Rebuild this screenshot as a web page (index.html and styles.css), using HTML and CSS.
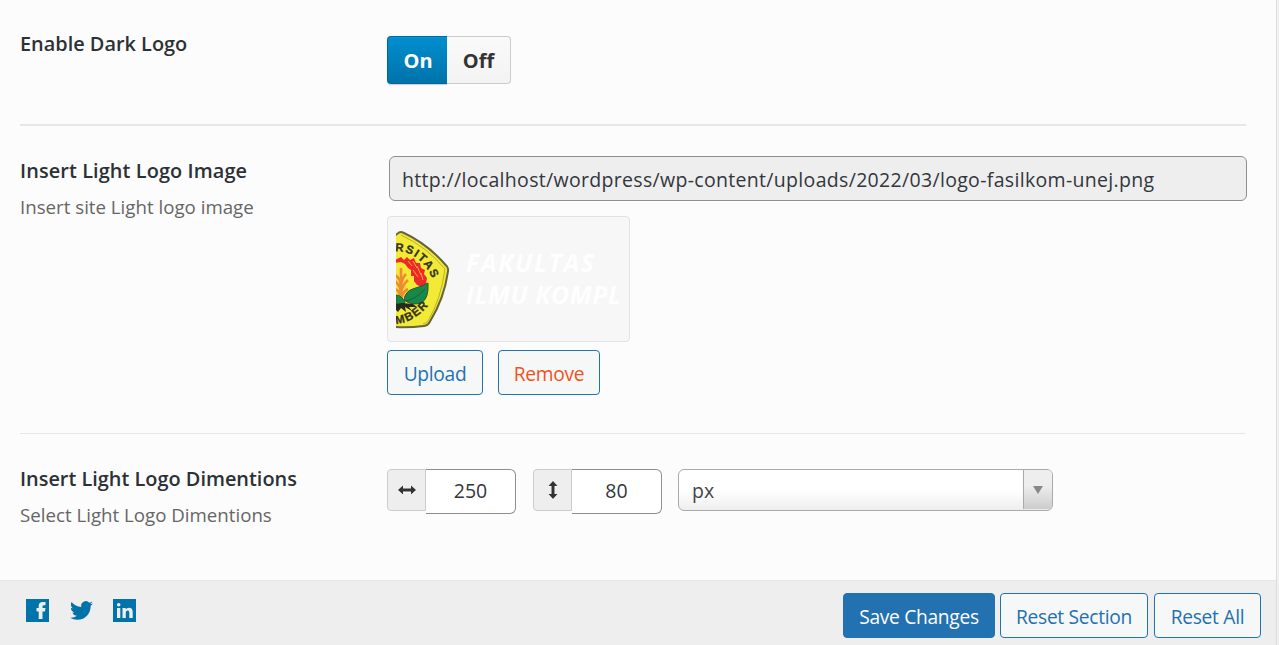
FILE: index.html
```html
<!DOCTYPE html>
<html lang="en">
<head>
<meta charset="utf-8">
<title>Logo settings</title>
<link rel="stylesheet" href="styles.css">
</head>
<body>
<div class="panel">
  <main class="fields">
    <section class="row row-switch">
      <div class="label"><h3>Enable Dark Logo</h3></div>
      <div class="control">
        <div class="switch"><span class="on">On</span><span class="off">Off</span></div>
      </div>
    </section>
    <section class="row row-image">
      <div class="label"><h3 class="wide">Insert Light Logo Image</h3><p>Insert site Light logo image</p></div>
      <div class="control">
        <div class="url"><span>http://localhost/wordpress/wp-content/uploads/2022/03/logo-fasilkom-unej.png</span></div>
        <div class="preview">
          <svg width="225" height="110" viewBox="0 0 225 110">
            <path d="M-44 45 3 8.500Q5 7.500 7 8.500Q32 20 51 42.500Q52.500 44.500 52 47.500Q48 75 34 97.500Q32 101.500 28 102Q4 105-20 101Z" fill="#f3ea35" stroke="#66643f" stroke-width="2"/>
            <path d="M5 11Q31 23 49 45Q45 75 32 97Q30 99.500 27 99.800" fill="none" stroke="#a7a037" stroke-width=".8"/>
            <path d="M-1 36 5 33 8 36 11 33 14 36 18 34 20 39 24 39 25 44 29 46 28 50 31 54 30 60 26 63 21 61 18 57 18 52 15 52 15 46 12 44 9 40 5 38-1 39Z" fill="#ed2929"/>
            <path d="M12 37 16 42M17 37 21 44M21 42 25 51M17 46 22 53M25 49 27 56" stroke="#f5a638" stroke-width="1"/>
            <path d="M5 77V44M-1 51Q4 54 5 61Q6 54 10 50M-1 57Q4 61 5 68Q7 60 12 56M-1 65Q4 67 5 75Q7 67 12 65" fill="none" stroke="#ef8b32" stroke-width="2.600"/>
            <path d="M8 76Q9 67 18 64.500Q27 62 32 59Q33 75 25 79Q16 82 8 76Z" fill="#15894b" stroke="#2f542e"/>
            <path d="M9 77Q19 76 29 65M0 71Q6 71 9 79Q4 82 0 80Z" fill="#15894b" stroke="#2c5a31"/>
            <path d="M0 80 6 79 17 80 21 83 13 83 16 87 9 83 10 88 5 84 2 88 0 86Z" fill="#29291f"/>
            <defs>
              <path id="arc-top" d="M-9 28Q24 22 38.500 60"/>
              <path id="arc-bottom" d="M-8 100Q18 102 36.500 76"/>
            </defs>
            <text class="seal"><textPath href="#arc-top" startOffset="8" textLength="49">RSITAS</textPath></text>
            <text class="seal"><textPath href="#arc-bottom" startOffset="8" textLength="38">MBER</textPath></text>
            <text class="word" x="70" y="48" textLength="128">FAKULTAS</text>
            <text class="word" x="70" y="80" textLength="155">ILMU KOMPL</text>
          </svg>
        </div>
        <div class="actions"><button class="btn upload">Upload</button><button class="btn remove">Remove</button></div>
      </div>
    </section>
    <section class="row row-dimensions">
      <div class="label"><h3>Insert Light Logo Dimentions</h3><p>Select Light Logo Dimentions</p></div>
      <div class="control dims">
        <div class="dim"><span class="addon"><svg width="20" height="20" viewBox="0 0 20 20"><path d="M1 10 6 5.500V8.500H14V5.500L19 10 14 14.500V11.500H6V14.500Z"/></svg></span><span class="num">250</span></div>
        <div class="dim"><span class="addon"><svg width="20" height="20" viewBox="0 0 20 20"><path d="M10 1 14.500 6H11.500V14H14.500L10 19 5.500 14H8.500V6H5.500Z"/></svg></span><span class="num">80</span></div>
        <div class="select"><span class="unit">px</span><span class="arrow"><svg width="10" height="8" viewBox="0 0 10 8"><path d="M0 0H10L5 8Z"/></svg></span></div>
      </div>
    </section>
  </main>
  <footer class="footer">
    <div class="social">
      <svg width="23" height="23" viewBox="0 0 23 23"><path fill-rule="evenodd" d="M0 0H23V23H0ZM12.700 20H16.500V12.500H19L19.500 9H16.500V7.400Q16.500 6.300 18 6.300H19.500V3H16.700Q12.700 3 12.700 7V9H10.500V12.500H12.700Z"/></svg>
      <svg width="23" height="23" viewBox="0 0 24 24"><path d="M23.950 4.570a10 10 0 0 1-2.820.77 4.960 4.960 0 0 0 2.160-2.720c-.95.550-2 .950-3.130 1.180a4.920 4.920 0 0 0-8.380 4.480C7.690 8.090 4.070 6.130 1.640 3.160a4.820 4.820 0 0 0-.67 2.480c0 1.710.87 3.210 2.190 4.100a4.900 4.900 0 0 1-2.230-.62v.06a4.920 4.920 0 0 0 3.950 4.830 5 5 0 0 1-2.210.08 4.940 4.940 0 0 0 4.600 3.420A9.870 9.870 0 0 1 0 19.540a14 14 0 0 0 7.550 2.210c9.050 0 14-7.500 14-13.990 0-.21 0-.42-.02-.63a9.940 9.940 0 0 0 2.420-2.560Z"/></svg>
      <svg width="23" height="23" viewBox="0 0 23 23"><path fill-rule="evenodd" d="M0 0H23V23H0ZM4 9V19H7.300V9ZM5.700 4A1.800 1.800 0 1 0 5.700 7.600A1.800 1.800 0 1 0 5.700 4ZM9.500 9V19H12.800V13.500Q13 11.500 14.700 11.500Q16.300 11.500 16.300 13.500V19H19.700V13Q19.700 8.700 16 8.700Q13.700 8.700 12.700 10.300V9Z"/></svg>
    </div>
    <div class="submit"><button class="btn save">Save Changes</button><button class="btn section">Reset Section</button><button class="btn all">Reset All</button></div>
  </footer>
</div>
</body>
</html>
```
FILE: styles.css
```css
* { box-sizing: border-box; }
body {
  margin: 0;
  height: 645px;
  overflow: hidden;
  background: #f1f1f1;
  font-family: "Open Sans", "Noto Sans", sans-serif;
  font-size: 19.5px;
  color: #32373c;
}
.panel {
  display: flex;
  flex-direction: column;
  width: 1277px;
  height: 645px;
  border-right: 1px solid #dcdcdc;
  background: #fcfcfc;
}
.fields { flex: 1; padding: 0 30px 0 20px; }
.row { display: flex; border-bottom: 1px solid #e7e7e7; }
.row-switch { height: 126px; padding-top: 30px; border-bottom-width: 2px; }
.row-image { height: 308px; padding-top: 30px; }
.row-dimensions { height: 146px; padding-top: 30px; border: 0; }
.label { flex: 0 0 367px; }
.label h3 { margin: 0; font-size: 19.9px; font-weight: 600; line-height: 29px; color: #2c3136; white-space: nowrap; }
.row-switch h3 { line-height: 28px; }
.label h3.wide { letter-spacing: .1px; }
.label p { margin: 8px 0 0; font-size: 18.7px; line-height: 28px; color: #666; white-space: nowrap; }
.control { flex: 1; min-width: 0; }
.switch { display: flex; width: 124px; height: 48px; margin-top: 6px; font-size: 20px; font-weight: 700; line-height: 48px; text-align: center; }
.on {
  width: 60px;
  padding-left: 1px;
  border: 1px solid #006799;
  border-right: 0;
  border-radius: 4px 0 0 4px;
  background: linear-gradient(#008ecf, #0073aa);
  box-shadow: 0 1px 1px #ccc, inset 0 1px #0099d5;
  color: #fff;
}
.off {
  width: 64px;
  border: 1px solid #ccc;
  border-left: 0;
  border-radius: 0 4px 4px 0;
  background: linear-gradient(#fafafa, #f3f3f3);
  color: #333;
}
.url {
  width: 858px;
  height: 45px;
  margin-left: 2px;
  padding-left: 12px;
  border: 1px solid #8c8f94;
  border-radius: 6px;
  background: #eee;
  letter-spacing: .32px;
  line-height: 45px;
  white-space: nowrap;
}
.preview { width: 243px; height: 126px; margin-top: 15px; padding: 7px 8px; border: 1px solid #e3e3e3; border-radius: 4px; background: #f7f7f7; }
.preview svg { display: block; overflow: hidden; }
.seal { font: bold 11.5px "Liberation Sans", sans-serif; fill: #34331f; stroke: #34331f; stroke-width: .3px; }
.word { font: italic 700 25px "Open Sans", sans-serif; fill: #fefefe; }
.actions { display: flex; gap: 15px; margin-top: 8px; }
.btn {
  height: 45px;
  padding: 2px 0 0;
  border: 1px solid #2271b1;
  border-radius: 4px;
  background: #f6f7f7;
  color: #2271b1;
  font-family: inherit;
  font-size: 19.2px;
  letter-spacing: -.3px;
  white-space: nowrap;
}
.upload { width: 96px; }
.remove { width: 102px; color: #ef521d; }
.dims { display: flex; padding-top: 5px; }
.dim { display: flex; align-items: flex-start; margin-right: 17px; }
.dim + .dim { margin-right: 16px; }
.addon { display: flex; align-items: center; justify-content: center; width: 39px; height: 42px; border: 1px solid #ccc; border-radius: 4px 0 0 4px; background: #eee; fill: #333; }
.addon svg { filter: drop-shadow(0 1px 0 #fff); }
.num { width: 90px; height: 45px; border: 1px solid #8c8f94; border-left: 0; border-radius: 0 6px 6px 0; background: #fff; line-height: 42px; text-align: center; }
.select { display: flex; width: 375px; height: 42px; border: 1px solid #aaa; border-radius: 6px; overflow: hidden; background: linear-gradient(#fff 50%, #eee); }
.unit { flex: 1; padding-left: 13px; line-height: 41px; color: #444; }
.arrow { display: flex; align-items: center; justify-content: center; width: 29px; height: 39px; border-left: 1px solid #aaa; background: linear-gradient(#eee 40%, #ccc); fill: #888; }
.footer { display: flex; justify-content: space-between; height: 65px; padding: 12px 15px 0 26px; border-top: 1px solid #e7e7e7; background: #eee; }
.social { display: flex; gap: 20.5px; padding-top: 6px; fill: #0073aa; }
.submit { display: flex; }
.save { width: 152px; margin-right: 5px; background: #2271b1; color: #fff; }
.section { width: 148px; margin-right: 6px; }
.all { width: 107px; }
```
